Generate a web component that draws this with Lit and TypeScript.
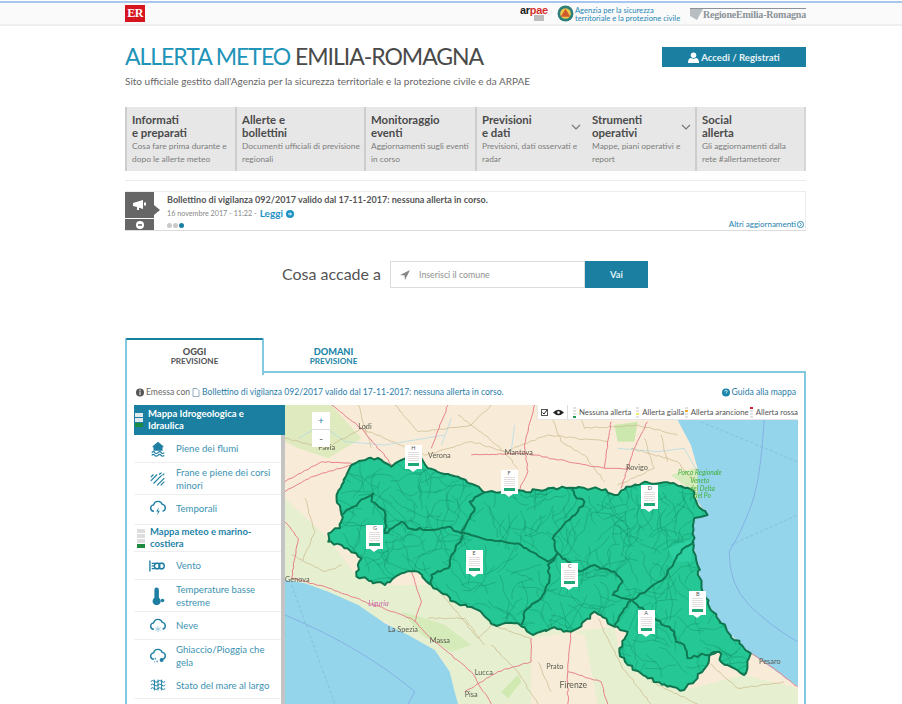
import { LitElement, html, css, svg } from 'lit';
import { customElement } from 'lit/decorators.js';

const NAV = [
  { w: 110, t: ['Informati', 'e preparati'], d: 'Cosa fare prima durante e dopo le allerte meteo' },
  { w: 129, t: ['Allerte e', 'bollettini'], d: 'Documenti ufficiali di previsione regionali' },
  { w: 111, t: ['Monitoraggio', 'eventi'], d: 'Aggiornamenti sugli eventi in corso' },
  { w: 110, t: ['Previsioni', 'e dati'], d: 'Previsioni, dati osservati e radar', arrow: true, plain: false },
  { w: 110, t: ['Strumenti', 'operativi'], d: 'Mappe, piani operativi e report', arrow: true, plain: true },
  { w: 111, t: ['Social', 'allerta'], d: 'Gli aggiornamenti dalla rete #allertameteorer' },
];

const OUTLINE =
  '200,180 250,160 290,165 320,185 350,165 410,160 430,190 470,205 520,215 570,240 600,262 680,262 760,255 860,248 940,250 990,270 1040,245 1090,232 1160,235 1225,255 1240,300 1270,330 1230,340 1225,410 1240,480 1255,560 1285,620 1330,680 1400,745 1380,810 1350,790 1310,770 1305,740 1280,745 1270,780 1240,820 1200,855 1150,845 1090,820 1030,780 1005,740 1030,680 990,665 930,620 880,670 860,680 800,670 745,690 700,655 630,660 580,615 510,590 440,540 400,500 350,505 300,540 215,515 230,460 170,420 130,410 130,385 165,370 170,330 155,270';

const BORDERS = [
  '170,330 240,280 265,265 260,290 300,320 300,385 350,350 370,370 430,375 490,365 530,385 555,340 570,310 555,290 600,262',
  '530,385 620,405 700,415 790,470 820,445',
  '860,248 870,270 900,290 880,320 830,370 805,400 820,445 790,480 795,520 770,580 720,620 710,660',
  '535,390 500,450 490,490 440,510 440,540',
  '820,445 850,470 885,500 930,480 990,500 1015,530 985,570 1040,585 1020,610 990,665',
  '1230,410 1180,450 1140,520 1060,575 1040,585 1110,640 1170,680 1175,710 1200,720 1210,760 1300,740',
];

const ROADS = [
  '0,260 80,215 200,180',
  '140,0 230,70 330,190',
  '490,0 440,130',
  '750,0 720,120 730,200 700,260',
  '980,50 960,190',
  '1090,50 1050,130 1010,250',
  '0,350 40,400 20,520',
  '20,520 120,545 240,590 380,640 450,710 560,800 620,897',
  '380,500 410,590 390,650',
  '860,680 850,790 850,897',
  '740,700 740,770 640,800 540,860',
  '850,800 950,830 970,897',
  '1400,745 1470,790 1540,845',
  '560,150 720,145 960,190 1040,190',
  '0,230 110,170 200,175',
];

const MINOR = [
  '0,100 120,130 230,70 420,150 560,110 660,140 790,90 970,110',
  '520,30 600,90 660,140 700,190',
  '790,0 830,110 900,150 960,230',
  '1040,130 1180,170 1230,230',
  '20,450 120,500 170,480',
  '450,540 580,700 620,660 740,700',
  '940,640 1010,780 1100,897',
  '620,720 700,800 760,897',
  '1260,760 1360,850 1500,830',
  '220,0 260,130',
  '1080,100 1110,190 1000,240',
  '330,0 400,80 560,60 620,0',
  '880,0 900,70 1060,60 1180,90',
  '1130,90 1150,170',
  '60,280 90,380 50,470',
  '430,640 540,640 600,720',
  '760,770 800,860',
  '1100,830 1240,897',
];

const WATER = [
  '40,100 110,60 180,110 300,120 480,90',
  '1000,130 1120,140 1200,130 1240,200',
  '500,40 470,120',
  '690,60 680,140',
];

const LABELS = [
  { x: 220, y: 72, t: 'Lodi' },
  { x: 100, y: 134, t: 'Pavia' },
  { x: 430, y: 160, t: 'Verona' },
  { x: 660, y: 150, t: 'Mantova' },
  { x: 1025, y: 195, t: 'Rovigo' },
  { x: 0, y: 532, t: 'Genova' },
  { x: 310, y: 680, t: 'La Spezia' },
  { x: 435, y: 714, t: 'Massa' },
  { x: 570, y: 810, t: 'Lucca' },
  { x: 785, y: 792, t: 'Prato' },
  { x: 540, y: 876, t: 'Pisa' },
  { x: 1425, y: 776, t: 'Pesaro' },
];

const PINS = [
  { l: 'H', x: 387, y: 155 },
  { l: 'F', x: 675, y: 230 },
  { l: 'G', x: 272, y: 395 },
  { l: 'E', x: 570, y: 470 },
  { l: 'C', x: 858, y: 510 },
  { l: 'D', x: 1098, y: 275 },
  { l: 'B', x: 1242, y: 595 },
  { l: 'A', x: 1087, y: 652 },
];

const LEGEND = [
  { t: 'Nessuna allerta', c: '#1f9d55', i: 3, w: 64 },
  { t: 'Allerta gialla', c: '#f5e663', i: 2, w: 49 },
  { t: 'Allerta arancione', c: '#f0a92d', i: 1, w: 66 },
  { t: 'Allerta rossa', c: '#d8203a', i: 0, w: 48 },
];

// seeded random so every run draws the same map
function seeded(seed: number) {
  let s = seed;
  return () => (s = (s * 16807) % 2147483647) / 2147483647;
}

// breaks each edge into short wobbly pieces, for the ragged province borders
function jag(points: string, seed: number, amp = 7) {
  const rnd = seeded(seed);
  const pts = points.split(' ').map((p) => p.split(',').map(Number));
  const closed = points === OUTLINE;
  const out: string[] = [];
  const last = closed ? pts.length : pts.length - 1;
  for (let i = 0; i < last; i++) {
    const a = pts[i];
    const b = pts[(i + 1) % pts.length];
    const n = Math.max(1, Math.round(Math.hypot(b[0] - a[0], b[1] - a[1]) / 11));
    for (let k = 0; k < n; k++) {
      const t = k / n;
      const o = k === 0 ? 0 : amp;
      const x = a[0] + (b[0] - a[0]) * t + (rnd() - 0.5) * o;
      const y = a[1] + (b[1] - a[1]) * t + (rnd() - 0.5) * o;
      out.push(`${x.toFixed(0)},${y.toFixed(0)}`);
    }
  }
  if (!closed) out.push(pts[last].join(','));
  return out.join(' ');
}

function rivers() {
  const rnd = seeded(17);
  const out: string[] = [];
  for (let i = 0; i < 520; i++) {
    let x = 130 + rnd() * 1270;
    let y = 170 + rnd() * 690;
    let p = `${x.toFixed(0)},${y.toFixed(0)}`;
    let ang = rnd() * Math.PI * 2;
    for (let k = 0; k < 5; k++) {
      ang += (rnd() - 0.5) * 1.4;
      const len = 12 + rnd() * 16;
      x += Math.cos(ang) * len;
      y += Math.sin(ang) * len;
      p += ` ${x.toFixed(0)},${y.toFixed(0)}`;
    }
    out.push(p);
  }
  return out;
}

function icon(name: string) {
  const base = (c: unknown) =>
    html`<svg class="ico" viewBox="0 0 20 20" fill="none" stroke="#1f7fa3" stroke-width="1.6">${c}</svg>`;
  const cloud = svg`<path d="M5.500 13.500a3.500 3.500 0 0 1-.3-7A5 5 0 0 1 14.800 6a3.800 3.800 0 0 1 .2 7.500" />`;
  switch (name) {
    case 'piene':
      return base(svg`<path fill="#1f7fa3" stroke="none" d="M10 2l6 5v1h-1v4H5V8H4V7z" /><path stroke-width="1.300" d="M3 14q2-2 3.500 0t3.500 0 3.500 0 3.500 0M3 17q2-2 3.500 0t3.500 0 3.500 0 3.500 0" />`);
    case 'frane':
      return base(svg`<path stroke-width="1.300" d="M2 8l3-3M2 12l7-7M5 15l9-9M9 17l8-8M13 17l4-4M11 5l3-2M15 6l2-2" />`);
    case 'temporali':
      return base(svg`${cloud}<path fill="#1f7fa3" stroke="none" d="M11 9l-3 5h2l-1 4 3-5h-2z" />`);
    case 'vento':
      return base(svg`<path stroke-width="1.500" d="M1 4v12" /><path stroke-width="1.400" d="M3 10h3" /><circle cx="9" cy="10" r="3" /><circle cx="14" cy="10" r="3" /><path stroke-width="1.300" d="M3 7h13M3 13h13" />`);
    case 'temp':
      return base(svg`<path fill="#1f7fa3" stroke="none" d="M6 3a2.500 2.500 0 0 1 5 0v9a4.500 4.500 0 1 1-5 0z" /><circle cx="15" cy="15" r="2" fill="#1f7fa3" stroke="none" />`);
    case 'neve':
      return base(svg`${cloud}<path stroke-width="1" stroke="#9ccbdc" d="M10 10v7M7 12l6 3M13 12l-6 3" />`);
    case 'ghiaccio':
      return base(svg`${cloud}<circle cx="14" cy="14.500" r="2.200" fill="#1f7fa3" stroke="none" /><path stroke-width="1.200" d="M7 12v2M9 15v2M6 16v1" />`);
    default:
      return base(svg`<path stroke-width="1.100" d="M2 6q2-2 4 0t4 0 4 0 4 0M2 10q2-2 4 0t4 0 4 0 4 0M2 14q2-2 4 0t4 0 4 0 4 0M6 4l0 12M10 4l0 12M14 4l0 12" />`);
  }
}

@customElement('app-root')
export class AppRoot extends LitElement {
  static styles = css`
    :host {
      display: block;
      height: 704px;
      overflow: hidden;
      background: #fff;
      font-family: Lato, 'Noto Sans', sans-serif;
      color: #4a4a4a;
    }
    .top {
      height: 21px;
      border-top: 2px solid #a9c6ee;
      margin-top: 1px;
      background: #fafafa;
      border-bottom: 2px solid #eeeeee;
      padding: 0 96px 0 125px;
      display: flex;
      align-items: center;
      justify-content: space-between;
    }
    .er {
      width: 20px;
      height: 17px;
      background: #d6141f;
      color: #fff;
      font: bold 12px 'Liberation Serif', serif;
      letter-spacing: -0.5px;
      display: flex;
      align-items: center;
      justify-content: center;
    }
    .logos {
      display: flex;
      align-items: center;
    }
    .arpae {
      font: bold 11px/10px 'Liberation Sans', sans-serif;
      letter-spacing: -0.3px;
      width: 37px;
      color: #d2302c;
      display: flex;
      flex-direction: column;
      margin-top: -2px;
    }
    .arpae b {
      color: #222;
    }
    .arpae i {
      display: block;
      width: 10px;
      height: 6px;
      margin-left: 14px;
      background: #bdbdbd;
    }
    .civil {
      width: 17px;
      height: 17px;
      margin-right: 1px;
    }
    .agency {
      color: #1d86b4;
      font-size: 7.6px;
      line-height: 8px;
      width: 115px;
      white-space: nowrap;
    }
    .region {
      display: flex;
      align-items: center;
      border-top: 1px solid #8b9298;
      color: #8b9298;
      font: bold 10px 'Liberation Serif', serif;
      letter-spacing: -0.2px;
      white-space: nowrap;
    }
    .region svg {
      width: 13px;
      height: 11px;
    }
    .main {
      width: 681px;
      margin-left: 125px;
    }
    .head {
      display: flex;
      justify-content: space-between;
      height: 81px;
      padding-top: 18px;
      box-sizing: border-box;
    }
    h1 {
      margin: 0;
      font-size: 23px;
      line-height: 25px;
      font-weight: 400;
      letter-spacing: -1.03px;
      white-space: nowrap;
    }
    h1 span {
      color: #2093b8;
    }
    .sub {
      font-size: 10px;
      line-height: 13px;
      margin-top: 6px;
      color: #666;
      white-space: nowrap;
    }
    .login {
      width: 144px;
      height: 20px;
      margin-top: 3px;
      background: #1a7fa0;
      color: #e9f3f7;
      font-size: 9.6px;
      font-weight: 700;
      display: flex;
      align-items: center;
      justify-content: center;
      gap: 2px;
    }
    .login svg {
      width: 11px;
      height: 11px;
    }
    nav {
      display: flex;
      height: 64px;
      background: #e7e7e7;
    }
    .cell {
      box-sizing: border-box;
      border-left: 2px solid #cdcdcd;
      padding: 6px 2px 0 5px;
      position: relative;
    }
    .cell.plain {
      border-left-color: transparent;
    }
    .cell:last-child {
      border-right: 2px solid #d6d6d6;
    }
    .cell h3 {
      margin: 0;
      font-size: 11.4px;
      line-height: 13px;
      font-weight: 700;
      color: #4b4b4b;
    }
    .cell p {
      margin: 1px 0 0;
      font-size: 8.4px;
      line-height: 12.5px;
      color: #7d7d7d;
    }
    .cell svg {
      position: absolute;
      right: 4px;
      top: 17px;
      width: 10px;
      height: 7px;
    }
    .rule {
      height: 1px;
      background: #ececec;
      margin: 9px 0 10px;
    }
    .notice {
      display: flex;
      height: 40px;
      box-sizing: border-box;
      border-top: 1px solid #ececec;
      border-bottom: 1px solid #dcdcdc;
      border-right: 1px solid #ececec;
    }
    .flag {
      width: 29px;
      position: relative;
      display: flex;
      flex-direction: column;
      gap: 1px;
      margin-right: 13px;
      flex: none;
    }
    .flag div {
      background: #666;
      display: flex;
      align-items: center;
      justify-content: center;
    }
    .flag .a {
      flex: 1;
    }
    .flag .b {
      height: 11px;
    }
    .flag .a::after {
      content: '';
      position: absolute;
      left: 29px;
      top: 13px;
      border-left: 6px solid #666;
      border-top: 5px solid transparent;
      border-bottom: 5px solid transparent;
    }
    .msg {
      flex: 1;
      position: relative;
      padding-top: 1px;
    }
    .msg strong {
      display: block;
      font-size: 9.05px;
      line-height: 13px;
      color: #555;
      white-space: nowrap;
    }
    .date {
      font-size: 7.2px;
      line-height: 13px;
      color: #888;
      display: flex;
      align-items: center;
      gap: 3px;
      margin-top: 1px;
    }
    .date b {
      color: #1c93c4;
      font-size: 10px;
    }
    .date svg {
      width: 8px;
      height: 8px;
    }
    .dots {
      display: flex;
      gap: 1px;
      margin-top: 3px;
    }
    .dots i {
      width: 5px;
      height: 5px;
      border-radius: 50%;
      background: #c9c9c9;
    }
    .dots i:last-child {
      background: #1a7fa0;
    }
    .more {
      position: absolute;
      right: 1px;
      bottom: 1px;
      font-size: 8px;
      color: #1c7fb0;
      display: flex;
      align-items: center;
      gap: 1px;
    }
    .more svg {
      width: 7px;
      height: 7px;
    }
    .search {
      display: flex;
      align-items: center;
      margin: 30px 0 50px 157px;
      height: 27px;
    }
    .search label {
      font-size: 16px;
      color: #555;
      width: 108px;
      margin-top: -3px;
      white-space: nowrap;
    }
    .input {
      width: 195px;
      height: 27px;
      box-sizing: border-box;
      border: 1px solid #dcdcdc;
      display: flex;
      align-items: center;
      padding-left: 9px;
      gap: 9px;
      font-size: 8.8px;
      color: #8f8f8f;
    }
    .input svg {
      width: 10px;
      height: 10px;
    }
    .go {
      width: 63px;
      height: 27px;
      background: #1a7fa0;
      color: #dfeef4;
      font-size: 9.4px;
      font-weight: 700;
      display: flex;
      align-items: center;
      justify-content: center;
    }
    .tabs {
      display: flex;
      height: 35px;
      position: relative;
      z-index: 1;
    }
    .tab {
      width: 139px;
      box-sizing: border-box;
      padding-top: 9px;
      text-align: center;
      font-size: 8.2px;
      font-weight: 700;
      line-height: 9.5px;
      color: #1a85a8;
    }
    .tab b {
      display: block;
      font-size: 9.2px;
    }
    .tab.on {
      color: #555;
      background: #fff;
      border: 2px solid #82c8de;
      border-top-color: #14829f;
      border-bottom: none;
      border-radius: 2px 2px 0 0;
      height: 37px;
      padding-top: 7px;
    }
    .panel {
      border: 2px solid #82c8de;
      border-bottom: none;
      margin-top: -2px;
      padding: 0 6px 0 7px;
      height: 335px;
      box-sizing: border-box;
    }
    .info {
      display: flex;
      justify-content: space-between;
      align-items: center;
      height: 32px;
      padding: 6px 2px 0;
      box-sizing: border-box;
      font-size: 8.6px;
      color: #666;
      white-space: nowrap;
    }
    .info span {
      display: flex;
      align-items: center;
      gap: 2px;
    }
    .info a {
      color: #2a7da8;
    }
    .info svg {
      width: 8px;
      height: 9px;
    }
    .body {
      display: flex;
      height: 299px;
    }
    aside {
      width: 151px;
      flex: none;
      box-sizing: border-box;
      border-right: 4px solid #c4c4c4;
      position: relative;
      background: #fff;
    }
    .lay {
      display: flex;
      align-items: center;
      gap: 2px;
      font-size: 9.5px;
      line-height: 12px;
      font-weight: 700;
      padding-left: 1px;
    }
    .lay.on {
      height: 30px;
      width: 151px;
      background: #1a7fa0;
      color: #fff;
      position: relative;
    }
    .lay.on::after {
      content: '';
      position: absolute;
      left: 151px;
      top: 10px;
      border-left: 4px solid #1a7fa0;
      border-top: 5px solid transparent;
      border-bottom: 5px solid transparent;
    }
    .lay.off {
      height: 27px;
      color: #1f83a8;
      padding-left: 3px;
      border-bottom: 1px solid #eee;
      box-sizing: border-box;
    }
    .bars {
      display: flex;
      flex-direction: column;
      gap: 1px;
      width: 8px;
      flex: none;
      margin-right: 3px;
    }
    .bars i {
      height: 4px;
      background: #ddd;
    }
    .on .bars i {
      background: #dfe9ee;
    }
    .bars i:last-child {
      background: #1c8a3f;
    }
    .row {
      display: flex;
      align-items: center;
      box-sizing: border-box;
      padding-left: 15px;
      gap: 9px;
      font-size: 9.6px;
      line-height: 13px;
      color: #3d93b2;
      border-bottom: 1px solid #efefef;
    }
    .ico {
      width: 18px;
      height: 18px;
      flex: none;
    }
    .map {
      flex: 1;
      position: relative;
      overflow: hidden;
      background: #f9ecd9;
    }
    .map > svg {
      position: absolute;
      left: 0;
      top: 0;
      width: 100%;
      height: 100%;
      filter: blur(0.5px);
    }
    .zoom {
      position: absolute;
      left: 27px;
      top: 7px;
      width: 18px;
      height: 35px;
      background: #fff;
      display: flex;
      flex-direction: column;
      color: #1a85a8;
      font-size: 10px;
      line-height: 17px;
      text-align: center;
    }
    .zoom span + span {
      border-top: 1px solid #ddd;
      color: #555;
    }
    .legend {
      position: absolute;
      left: 252px;
      top: 0;
      width: 262px;
      height: 15px;
      background: #fff;
      border: 1px solid #e6e6e6;
      border-top: none;
      box-sizing: border-box;
      display: flex;
      align-items: center;
      font-size: 7.8px;
      color: #555;
      white-space: nowrap;
    }
    .eye {
      display: flex;
      align-items: center;
      gap: 5px;
      width: 30px;
      padding-left: 3px;
      height: 100%;
      box-sizing: border-box;
      border-right: 1px solid #ddd;
      flex: none;
      margin-right: 5px;
    }
    .eye svg {
      width: 7px;
      height: 7px;
    }
    .eye svg + svg {
      width: 11px;
    }
    .leg {
      display: flex;
      align-items: center;
      gap: 3px;
    }
    .pip {
      display: flex;
      flex-direction: column;
      gap: 1px;
      width: 3px;
    }
    .pip i {
      height: 2px;
      background: #e2e2e2;
    }
    .pin {
      position: absolute;
      width: 17px;
      height: 24px;
      margin: -12px 0 0 -9px;
      background: #fff;
      text-align: center;
      font-size: 5.5px;
      line-height: 7px;
      color: #555;
      box-sizing: border-box;
      padding: 0 3px;
    }
    .pin::after {
      content: '';
      position: absolute;
      left: 4px;
      top: 24px;
      border-top: 3px solid #fff;
      border-left: 4px solid transparent;
      border-right: 4px solid transparent;
    }
    .pin i {
      display: block;
      height: 10px;
      background: repeating-linear-gradient(#e3dcdc 0 1px, #fff 1px 2px);
    }
    .pin u {
      display: block;
      height: 3px;
      margin-top: 1px;
      background: #1fa776;
      text-decoration: none;
    }
  `;

  private renderMap() {
    const outline = jag(OUTLINE, 5, 10);
    return html`<svg viewBox="0 0 1542 897" preserveAspectRatio="none">
      <defs>
        <clipPath id="reg"><polygon points=${outline} /></clipPath>
      </defs>
      <rect width="1542" height="897" fill="#f8ecd8" />
      <polygon fill="#e6efcf" points="0,280 130,400 215,515 300,540 440,540 580,615 700,655 860,680 990,665 1005,740 1090,820 1200,855 1380,810 1542,850 1542,897 520,897 470,760 300,650 0,520" />
      <polygon fill="#f7ecd8" points="740,700 860,680 900,690 940,897 740,897" />
      <polygon fill="#d4e9b5" points="0,0 140,0 230,100 130,160 40,130 0,110" opacity=".7" />
      <polygon fill="#cde8ae" points="990,60 1060,50 1050,110 1000,110" />
      <polygon fill="#cfe9b0" points="650,860 700,810 710,830 670,880" />
      <polygon fill="#cfe9b0" points="350,620 420,640 480,660 560,720 500,740 410,690" opacity=".7" />
      <polygon fill="#c8eab0" points="1160,210 1230,190 1300,230 1290,280 1240,290 1200,240" opacity=".7" />
      <polygon fill="#94d5ec" points="1180,45 1542,45 1542,845 1400,745 1330,680 1285,620 1255,560 1240,480 1225,410 1230,340 1270,330 1240,290 1240,190 1220,120" />
      <polygon fill="#94d5ec" points="0,525 60,535 130,560 220,600 300,655 370,690 450,735 495,800 510,860 520,897 0,897" />
      <path d="M1440 45q-10 180-40 260t-65 135q0 100 60 160t145 110M0 630q120 50 220 110t170 120l-20 37" fill="none" stroke="#7c9fe0" stroke-width="2" />
      <path d="M1250 50l290 120M20 540l130 357M1340 420l200-90" fill="none" stroke="#75aacb" stroke-width="1.500" stroke-dasharray="10 6" />
      ${WATER.map((p) => svg`<polyline points=${p} fill="none" stroke="#a8d8e8" stroke-width="2" />`)}
      ${MINOR.map((p) => svg`<polyline points=${jag(p, 9, 5)} fill="none" stroke="#c9b58a" stroke-width="2" />`)}
      ${ROADS.map((p) => svg`<polyline points=${jag(p, 11, 4)} fill="none" stroke="#e8808c" stroke-width="3" />`)}
      <polygon points=${outline} fill="#25c795" />
      <g clip-path="url(#reg)">
        ${rivers().map((p) => svg`<polyline points=${p} fill="none" stroke="#149068" stroke-width="1.300" />`)}
        <polygon points="1150,430 1230,400 1220,470 1170,470" fill="#2bcfa0" />
      </g>
      <polygon points=${outline} fill="none" stroke="#10754f" stroke-width="6" stroke-linejoin="round" />
      ${BORDERS.map((p, i) => svg`<polyline points=${jag(p, 23 + i, 8)} fill="none" stroke="#0f7a54" stroke-width="6" stroke-linejoin="round" />`)}
      <g font-family="Lato, sans-serif" font-size="22" fill="#5a5a4e">
        ${LABELS.map((l) => svg`<text x=${l.x} y=${l.y}>${l.t}</text>`)}
        <text x="825" y="850" font-size="26">Firenze</text>
        <text x="250" y="602" fill="#c868a8" font-style="italic">Liguria</text>
      </g>
      <g font-family="Lato, sans-serif" font-size="20" fill="#3fae3a" font-style="italic" text-anchor="middle">
        <text x="1247" y="210">Porco Regionale</text>
        <text x="1247" y="234">Veneto</text>
        <text x="1255" y="257">del Delta</text>
        <text x="1255" y="280">del Po</text>
      </g>
    </svg>`;
  }

  render() {
    return html`
      <div class="top">
        <div class="er">ER</div>
        <div class="logos">
          <div class="arpae"><span><b>ar</b>pae</span><i></i></div>
          <svg class="civil" viewBox="0 0 16 16">
            <circle cx="8" cy="8" r="7.500" fill="#2e7f7a" />
            <circle cx="8" cy="8" r="5" fill="#f0c74a" />
            <path d="M8 3.500L12.500 11h-9z" fill="#cf5b2a" />
          </svg>
          <div class="agency">Agenzia per la sicurezza<br />territoriale e la protezione civile</div>
          <div class="region">
            <svg viewBox="0 0 13 11"><path d="M0 0h13L7 11 0 7z" fill="#b9bec2" /></svg>
            RegioneEmilia-Romagna
          </div>
        </div>
      </div>
      <div class="main">
        <div class="head">
          <div>
            <h1><span>ALLERTA METEO</span> EMILIA-ROMAGNA</h1>
            <div class="sub">Sito ufficiale gestito dall'Agenzia per la sicurezza territoriale e la protezione civile e da ARPAE</div>
          </div>
          <div class="login">
            <svg viewBox="0 0 12 12" fill="#fff"><circle cx="6" cy="3.500" r="3" /><path d="M0 12q0-5 3-5.500 3 1.500 6 0 3 .5 3 5.500z" /></svg>
            Accedi / Registrati
          </div>
        </div>
        <nav>
          ${NAV.map(
            (n) => html`<div class="cell ${n.plain ? 'plain' : ''}" style="width:${n.w}px">
              <h3>${n.t[0]}<br />${n.t[1]}</h3>
              <p>${n.d}</p>
              ${n.arrow
                ? html`<svg viewBox="0 0 10 7" fill="none" stroke="#777" stroke-width="1.200"><path d="M1 1l4 4 4-4" /></svg>`
                : ''}
            </div>`
          )}
        </nav>
        <div class="rule"></div>
        <div class="notice">
          <div class="flag">
            <div class="a">
              <svg width="13" height="12" viewBox="0 0 13 12" fill="#fff"><path d="M0 4l10-3v9L6 8.800V11H4V8L0 7zM11 3.500h2v3h-2z" /></svg>
            </div>
            <div class="b">
              <svg width="8" height="8" viewBox="0 0 8 8"><circle cx="4" cy="4" r="4" fill="#fff" /><path d="M2 3h4v2H2z" fill="#888" /></svg>
            </div>
          </div>
          <div class="msg">
            <strong>Bollettino di vigilanza 092/2017 valido dal 17-11-2017: nessuna allerta in corso.</strong>
            <div class="date">
              16 novembre 2017 - 11:22 - <b>Leggi</b>
              <svg viewBox="0 0 8 8"><circle cx="4" cy="4" r="4" fill="#1c93c4" /><path d="M2 4h3M4 2.500L5.500 4 4 5.500" stroke="#fff" fill="none" /></svg>
            </div>
            <div class="dots"><i></i><i></i><i></i></div>
            <div class="more">
              Altri aggiornamenti
              <svg viewBox="0 0 8 8"><circle cx="4" cy="4" r="3.500" fill="none" stroke="#1c7fb0" /><path d="M3 2l2 2-2 2" stroke="#1c7fb0" fill="none" /></svg>
            </div>
          </div>
        </div>
        <div class="search">
          <label>Cosa accade a</label>
          <div class="input">
            <svg viewBox="0 0 10 10" fill="#888"><path d="M10 0L0 5l4.500.5L5 10z" /></svg>
            Inserisci il comune
          </div>
          <div class="go">Vai</div>
        </div>
        <div class="tabs">
          <div class="tab on"><b>OGGI</b>PREVISIONE</div>
          <div class="tab"><b>DOMANI</b>PREVISIONE</div>
        </div>
        <div class="panel">
          <div class="info">
            <span>
              <svg viewBox="0 0 8 8"><circle cx="4" cy="4" r="4" fill="#555" /><path d="M4 3v3.500" stroke="#fff" /><circle cx="4" cy="1.800" r=".7" fill="#fff" /></svg>
              Emessa con
              <svg viewBox="0 0 8 9" fill="none" stroke="#7a9ab0" stroke-width=".8"><path d="M1 .5h4l2 2v6H1z" /></svg>
              <a>Bollettino di vigilanza 092/2017 valido dal 17-11-2017: nessuna allerta in corso.</a>
            </span>
            <span>
              <svg viewBox="0 0 8 8"><circle cx="4" cy="4" r="4" fill="#1a85a8" /><path d="M2.800 3a1.200 1.200 0 1 1 1.600 1.100L4 5" stroke="#fff" fill="none" stroke-width=".8" /></svg>
              <a>Guida alla mappa</a>
            </span>
          </div>
          <div class="body">
            <aside>
              <div class="lay on">
                <div class="bars"><i></i><i></i><i></i></div>
                <div>Mappa Idrogeologica e<br />Idraulica</div>
              </div>
              <div class="row" style="height:28px">${icon('piene')}Piene dei flumi</div>
              <div class="row" style="height:32px">${icon('frane')}<span>Frane e piene dei corsi minori</span></div>
              <div class="row" style="height:30px;padding-bottom:3px">${icon('temporali')}Temporali</div>
              <div class="lay off">
                <div class="bars"><i></i><i></i><i></i><i></i></div>
                <div>Mappa meteo e marino-costiera</div>
              </div>
              <div class="row" style="height:28px">${icon('vento')}Vento</div>
              <div class="row" style="height:32px">${icon('temp')}<span>Temperature basse estreme</span></div>
              <div class="row" style="height:28px">${icon('neve')}Neve</div>
              <div class="row" style="height:32px;border:none">${icon('ghiaccio')}<span>Ghiaccio/Pioggia che gela</span></div>
              <div class="row" style="height:27px">${icon('mare')}Stato del mare al largo</div>
            </aside>
            <div class="map">
              ${this.renderMap()}
              <div class="zoom"><span>+</span><span>-</span></div>
              ${PINS.map(
                (p) => html`<div class="pin" style="left:${((p.x / 1542) * 100).toFixed(2)}%;top:${(p.y / 3).toFixed(0)}px">
                  ${p.l}<i></i><u></u>
                </div>`
              )}
              <div class="legend">
                <div class="eye">
                  <svg viewBox="0 0 7 7"><rect x=".5" y=".5" width="6" height="6" fill="#fff" stroke="#555" /><path d="M1.500 3.500l1.500 1.500 3-4" stroke="#222" fill="none" /></svg>
                  <svg viewBox="0 0 11 7"><path d="M0 3.500Q5.500-2 11 3.500 5.500 9 0 3.500z" fill="#222" /><circle cx="5.500" cy="3.500" r="1.300" fill="#fff" /></svg>
                </div>
                ${LEGEND.map(
                  (l) => html`<div class="leg" style="width:${l.w}px">
                    <div class="pip">
                      ${[0, 1, 2, 3].map((k) => html`<i style=${k === l.i || (l.i === 3 && k === 3) ? `background:${l.c}` : ''}></i>`)}
                    </div>
                    ${l.t}
                  </div>`
                )}
              </div>
            </div>
          </div>
        </div>
      </div>
    `;
  }
}
